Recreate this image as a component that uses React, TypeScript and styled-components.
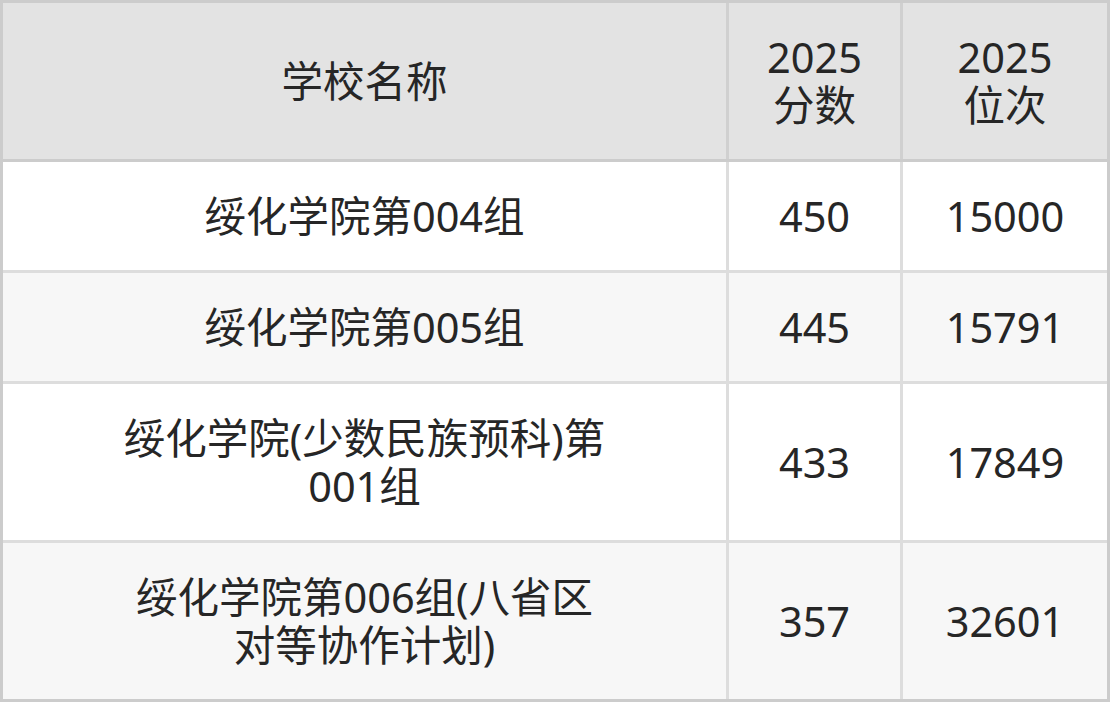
import React from 'react';
import styled, {createGlobalStyle} from 'styled-components';

const GlobalStyle = createGlobalStyle`
  html, body {
    margin: 0;
    padding: 0;
    background: #ffffff;
  }
  body {
    font-family: "Noto Sans", "Noto Sans CJK SC", sans-serif;
  }
`;

type RowData = {
  name: string[];
  score: string;
  rank: string;
};

const rows: RowData[] = [
  {name: ['绥化学院第004组'], score: '450', rank: '15000'},
  {name: ['绥化学院第005组'], score: '445', rank: '15791'},
  {name: ['绥化学院(少数民族预科)第', '001组'], score: '433', rank: '17849'},
  {name: ['绥化学院第006组(八省区', '对等协作计划)'], score: '357', rank: '32601'},
];

const App = () => {
  return (
    <>
      <GlobalStyle />
      <Table>
        <HeadRow>
          <HeadCell>学校名称</HeadCell>
          <HeadCell>
            2025
            <br />
            分数
          </HeadCell>
          <HeadCell>
            2025
            <br />
            位次
          </HeadCell>
        </HeadRow>
        {rows.map((row, i) => (
          <BodyRow key={row.rank}>
            <Cell $striped={i % 2 === 1}>
              <NameText>
                {row.name.map((line, j) => (
                  <React.Fragment key={line}>
                    {j > 0 && <br />}
                    {line}
                  </React.Fragment>
                ))}
              </NameText>
            </Cell>
            <Cell $striped={i % 2 === 1}>{row.score}</Cell>
            <Cell $striped={i % 2 === 1}>{row.rank}</Cell>
          </BodyRow>
        ))}
      </Table>
    </>
  );
};

export default App;

const Table = styled.div`
  width: 1110px;
  box-sizing: border-box;
  border: 3px solid #cccccc;
  display: flex;
  flex-direction: column;
  gap: 3px;
  background: #dddddd;
`;

const HeadRow = styled.div`
  display: grid;
  grid-template-columns: 723px 171px 1fr;
  gap: 3px;
  background: #d0d0d0;
  border-bottom: 3px solid #cccccc;
  margin-bottom: -3px;
`;

const BodyRow = styled.div`
  display: grid;
  grid-template-columns: 723px 171px 1fr;
  gap: 3px;
`;

const HeadCell = styled.div`
  background: #e3e3e3;
  padding: 30px 0;
  font-size: 41.5px;
  line-height: 48px;
  color: #262626;
  text-align: center;
  display: flex;
  align-items: center;
  justify-content: center;
`;

const Cell = styled.div<{$striped: boolean}>`
  background: ${p => (p.$striped ? '#f7f7f7' : '#ffffff')};
  padding: 30px 0;
  font-size: 41.5px;
  line-height: 48px;
  color: #262626;
  text-align: center;
  display: flex;
  align-items: center;
  justify-content: center;
`;

const NameText = styled.span`
  display: block;
`;
